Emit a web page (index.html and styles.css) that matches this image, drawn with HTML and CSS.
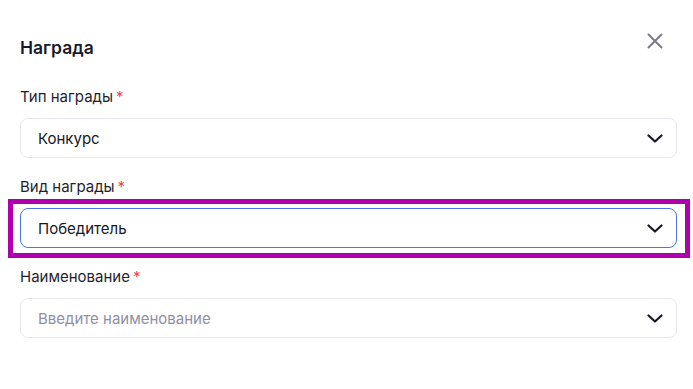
FILE: index.html
```html
<!DOCTYPE html>
<html lang="ru">
<head>
<meta charset="utf-8">
<link rel="stylesheet" href="styles.css">
</head>
<body>
<div class="dialog">
  <div class="header">
    <h2 class="title">Награда</h2>
    <button class="close" aria-label="Закрыть">
      <svg width="16" height="16" viewBox="0 0 16 16"><path d="M1.5 1.5L14.5 14.5M14.5 1.5L1.5 14.5" stroke="#7b7a8f" stroke-width="2" stroke-linecap="round"/></svg>
    </button>
  </div>
  <div class="fields">
    <div class="field">
      <div class="label">Тип награды<span class="req">*</span></div>
      <div class="select">
        <span class="value">Конкурс</span>
        <svg class="chev" width="16" height="9" viewBox="0 0 16 9"><path d="M1.5 1.5L8 7.5L14.5 1.5" fill="none" stroke="#161626" stroke-width="2.2" stroke-linecap="round" stroke-linejoin="round"/></svg>
      </div>
    </div>
    <div class="field">
      <div class="label">Вид награды<span class="req">*</span></div>
      <div class="select-wrap">
        <div class="select active">
          <span class="value">Победитель</span>
          <svg class="chev" width="16" height="9" viewBox="0 0 16 9"><path d="M1.5 1.5L8 7.5L14.5 1.5" fill="none" stroke="#161626" stroke-width="2.2" stroke-linecap="round" stroke-linejoin="round"/></svg>
        </div>
        <div class="highlight"></div>
      </div>
    </div>
    <div class="field">
      <div class="label">Наименование<span class="req">*</span></div>
      <div class="select">
        <span class="value placeholder">Введите наименование</span>
        <svg class="chev" width="16" height="9" viewBox="0 0 16 9"><path d="M1.5 1.5L8 7.5L14.5 1.5" fill="none" stroke="#161626" stroke-width="2.2" stroke-linecap="round" stroke-linejoin="round"/></svg>
      </div>
    </div>
  </div>
</div>
</body>
</html>
```
FILE: styles.css
```css
* { box-sizing: border-box; }
html, body { margin: 0; background: #fff; }
body {
  font-family: Inter, "Noto Sans", sans-serif;
  color: #1b1b2b;
  width: 693px;
  height: 389px;
  overflow: hidden;
}
.dialog {
  padding: 36px 16px 0 20px;
}
.header {
  display: flex;
  justify-content: space-between;
  align-items: center;
  height: 24px;
}
.title {
  margin: 0;
  font-size: 17.5px;
  font-weight: 600;
  line-height: 24px;
  color: #1a1a2b;
}
.close {
  align-self: flex-start;
  margin-top: -7px;
  margin-right: 10px;
  width: 24px;
  height: 24px;
  padding: 0;
  border: 0;
  background: none;
  display: flex;
  align-items: center;
  justify-content: center;
}
.fields {
  margin-top: 27px;
  display: flex;
  flex-direction: column;
  gap: 19px;
}
.field {
  display: flex;
  flex-direction: column;
  gap: 11px;
}
.label {
  font-size: 15px;
  line-height: 20px;
  color: #1f1f2e;
}
.req {
  color: #f0464f;
  margin-left: 3px;
}
.select {
  height: 40px;
  border: 1px solid #e7e7ef;
  border-radius: 8px;
  display: flex;
  align-items: center;
  justify-content: space-between;
  padding: 0 13px 0 17px;
  background: #fff;
}
.select.active {
  border-color: #4d74ea;
}
.value {
  font-size: 15px;
  color: #161625;
}
.value.placeholder {
  color: #8f8fa3;
}
.chev { display: block; }
.select-wrap {
  position: relative;
}
.highlight {
  position: absolute;
  top: -9px;
  left: -12px;
  right: -13px;
  bottom: -10px;
  border: 5px solid #b000ad;
  pointer-events: none;
}
```
